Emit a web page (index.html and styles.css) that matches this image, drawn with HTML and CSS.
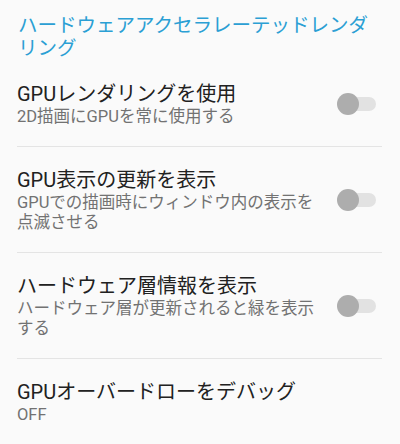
FILE: index.html
```html
<!DOCTYPE html>
<html lang="ja">
<head>
<meta charset="utf-8">
<title>ハードウェアアクセラレーテッドレンダリング</title>
<link rel="stylesheet" href="styles.css">
</head>
<body>
<div class="screen">
  <div class="category">ハードウェアアクセラレーテッドレンダリング</div>
  <div class="pref">
    <div class="text">
      <div class="title">GPUレンダリングを使用</div>
      <div class="summary">2D描画にGPUを常に使用する</div>
    </div>
    <div class="switch"><span class="track"></span><span class="thumb"></span></div>
  </div>
  <div class="pref">
    <div class="text">
      <div class="title">GPU表示の更新を表示</div>
      <div class="summary">GPUでの描画時にウィンドウ内の表示を点滅させる</div>
    </div>
    <div class="switch"><span class="track"></span><span class="thumb"></span></div>
  </div>
  <div class="pref">
    <div class="text">
      <div class="title">ハードウェア層情報を表示</div>
      <div class="summary">ハードウェア層が更新されると緑を表示する</div>
    </div>
    <div class="switch"><span class="track"></span><span class="thumb"></span></div>
  </div>
  <div class="pref last">
    <div class="text">
      <div class="title">GPUオーバードローをデバッグ</div>
      <div class="summary">OFF</div>
    </div>
  </div>
</div>
</body>
</html>
```
FILE: styles.css
```css
html, body {
  margin: 0;
  padding: 0;
  background: #fafafa;
}
.screen {
  width: 400px;
  height: 444px;
  overflow: hidden;
  font-family: Roboto, "Noto Sans CJK JP", sans-serif;
}
.category {
  padding: 15px 18px 1px 18px;
  font-size: 19.5px;
  line-height: 22.5px;
  color: #2b9fd4;
}
.pref {
  margin: 0 18px 0 17px;
  padding: 20px 0 19px;
  border-bottom: 1px solid #e4e4e4;
  display: flex;
  align-items: center;
}
.pref.last {
  border-bottom: none;
}
.text {
  flex: 1;
  min-width: 0;
}
.title {
  font-size: 20px;
  line-height: 26px;
  color: #212121;
}
.summary {
  font-size: 16.5px;
  line-height: 20px;
  color: #727272;
}
.switch {
  position: relative;
  width: 39px;
  height: 22px;
  margin: 0 6px 0 15px;
  flex: none;
}
.track {
  position: absolute;
  left: 3px;
  right: 0;
  top: 4px;
  height: 14px;
  border-radius: 7px;
  background: #e2e2e2;
}
.thumb {
  position: absolute;
  left: 0;
  top: 0;
  width: 22px;
  height: 22px;
  border-radius: 50%;
  background: #adadad;
}
```
